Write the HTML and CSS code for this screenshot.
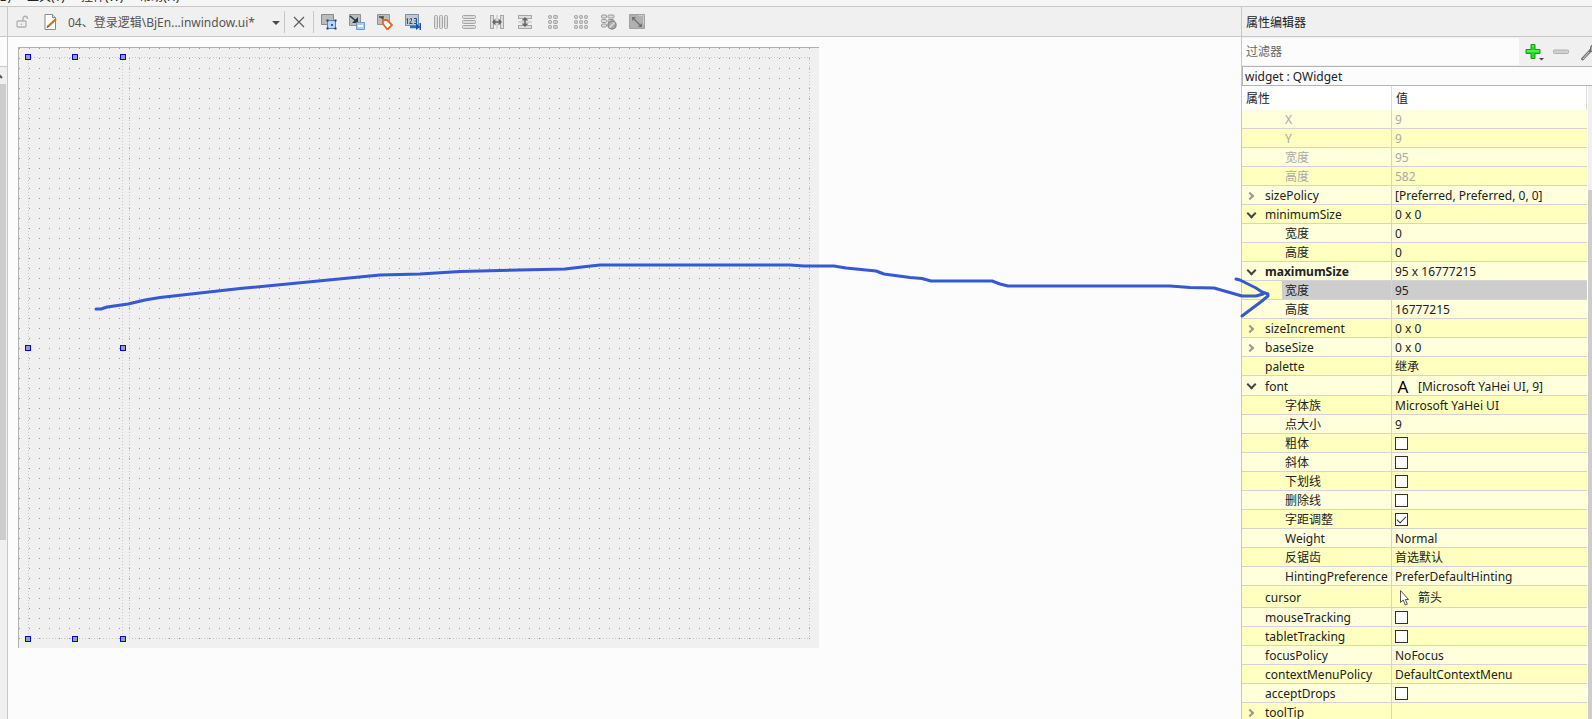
FILE: index.html
```html
<!DOCTYPE html>
<html lang="zh-CN">
<head>
  <meta charset="UTF-8" />
  <meta name="viewport" content="width=device-width, initial-scale=1.0"/>
  <title>BjEn...inwindow.ui - Designer</title>
  <link rel="stylesheet" href="styles.css">
</head>
<body>

  <nav class="menubar">
    <span>构建(B)</span>
    <span>工具(T)</span>
    <span>控件(W)</span>
    <span>帮助(H)</span>
  </nav>

  <div class="workspace">

    <!-- tail of the widget box -->
    <aside class="widget-box">
      <div class="box-title"></div>
      <div class="box-filter"></div>
      <div class="box-scroll">
        <svg class="scroll-up" width="6" height="17" viewBox="0 0 6 17"><path d="M-4 11L-1 8L2 11" fill="none" stroke="#555" stroke-width="2"/></svg>
        <div class="box-thumb"></div>
      </div>
    </aside>

    <main class="editor">
      <div class="toolbar">
        <button class="tool lock" aria-label="锁定">
          <svg width="16" height="16" viewBox="0 0 16 16" fill="none" stroke="#b0b0b0" stroke-width="1.3"><rect x="2" y="7" width="9" height="6" rx="1"/><path d="M8 7V4.500C8 1.500 12.500 1.500 12.500 4.500V5"/><path d="M6.500 9.500v1.500"/></svg>
        </button>
        <button class="tool doc" aria-label="文件">
          <svg width="16" height="16" viewBox="0 0 16 16"><path d="M2 .5h7.500l3 3V15.500H2z" fill="#fff" stroke="#8a8a8a"/><path d="M9.500 .5v3h3" fill="#ddd" stroke="#8a8a8a"/><path d="M5 12.500L13 5" stroke="#c8701c" stroke-width="2.2"/><path d="M3.500 14l1-2.500 1.500 1.500z" fill="#444"/></svg>
        </button>
        <div class="file-picker">
          <select aria-label="打开的文件">
            <option>04、登录逻辑\BjEn...inwindow.ui*</option>
          </select>
          <svg class="caret" width="8" height="4" viewBox="0 0 8 4"><path d="M0 0h8L4 4z" fill="#4a4a4a"/></svg>
        </div>
        <button class="tool close" aria-label="关闭">
          <svg width="12" height="12" viewBox="0 0 12 12"><path d="M1 1l10 10M11 1L1 11" stroke="#5c5c5c" stroke-width="1.2"/></svg>
        </button>
        <div class="tools">
          <button class="tool" aria-label="编辑控件">
            <svg width="16" height="16" viewBox="0 0 16 16"><path d="M.5 .5h12v10H.5z" fill="#bcbcbc" stroke="#8a8a8a"/><path d="M6.500 6.500h8v8h-8z" fill="#b8d6fa" stroke="#4f83c4"/><path d="M5.500 5.500h2v2h-2zM13.500 5.500h2v2h-2zM5.500 13.500h2v2h-2zM13.500 13.500h2v2h-2z" fill="#24405f"/><path d="M10 10h2v2h-2z" fill="#2c5fa8"/></svg>
          </button>
          <button class="tool" aria-label="编辑信号/槽">
            <svg width="16" height="16" viewBox="0 0 16 16"><path d="M.5 .5h11v11H.5z" fill="#bcbcbc" stroke="#929292"/><path d="M1 2l6 5" stroke="#20394a" stroke-width="1.600"/><path d="M9 3v6H3z" fill="#20394a"/><path d="M7.500 8.500h8v7h-8z" fill="#a9cdfa" stroke="#6d9ad0"/><path d="M9 12h5" stroke="#fff" stroke-width="2"/></svg>
          </button>
          <button class="tool" aria-label="编辑伙伴">
            <svg width="16" height="16" viewBox="0 0 16 16"><path d="M.5 .5h12v10H.5z" fill="#bcbcbc" stroke="#929292"/><path d="M2 3h5M4 3l4 4" stroke="#444" stroke-width="1.300"/><path d="M6 6h4l5 5-4.500 4.500L6 10z" fill="#fff" stroke="#e06a24" stroke-width="1.800"/></svg>
          </button>
          <button class="tool" aria-label="编辑Tab顺序">
            <svg width="16" height="16" viewBox="0 0 16 16"><path d="M.5 .5h13v11H.5z" fill="#c4c8cc" stroke="#7190b6"/><g fill="none" stroke="#17559e"><path d="M1.500 5.500l1-1V10M4.500 5.500l1-1h1v2L4.500 9.500h3M9 4.500h2.500v5H9M9.500 7h2"/></g><path d="M5 13h7" stroke="#2d6dbb" stroke-width="2.500"/><path d="M11 9l4 4-4 3zM14.500 9h1.500v7h-1.500z" fill="#17559e"/></svg>
          </button>
          <button class="tool" aria-label="水平布局">
            <svg width="16" height="16" viewBox="0 0 16 16" fill="#ddd" stroke="#a6a6a6"><rect x="1.500" y="1.500" width="3" height="13" rx="1"/><rect x="6.500" y="1.500" width="3" height="13" rx="1"/><rect x="11.500" y="1.500" width="3" height="13" rx="1"/></svg>
          </button>
          <button class="tool" aria-label="垂直布局">
            <svg width="16" height="16" viewBox="0 0 16 16" fill="#ddd" stroke="#a6a6a6"><rect x="1.500" y="1.500" width="13" height="3" rx="1"/><rect x="1.500" y="6.500" width="13" height="3" rx="1"/><rect x="1.500" y="11.500" width="13" height="3" rx="1"/></svg>
          </button>
          <button class="tool" aria-label="水平分裂器">
            <svg width="16" height="16" viewBox="0 0 16 16"><g fill="#ddd" stroke="#a6a6a6"><rect x="1.500" y="1.500" width="3" height="13"/><rect x="11.500" y="1.500" width="3" height="13"/></g><path d="M8 1v14" stroke="#bbb"/><path d="M4 8h8" stroke="#666" stroke-width="1.500"/><path d="M6.500 4.500v7L3 8zM9.500 4.500v7L13 8z" fill="#666"/></svg>
          </button>
          <button class="tool" aria-label="垂直分裂器">
            <svg width="16" height="16" viewBox="0 0 16 16"><g fill="#ddd" stroke="#a6a6a6"><rect x="1.500" y="1.500" width="13" height="3"/><rect x="1.500" y="11.500" width="13" height="3"/></g><path d="M1 8h14" stroke="#bbb"/><path d="M8 4v8" stroke="#666" stroke-width="1.500"/><path d="M4.500 6.500h7L8 3zM4.500 9.500h7L8 13z" fill="#666"/></svg>
          </button>
          <button class="tool" aria-label="表单布局">
            <svg width="16" height="16" viewBox="0 0 16 16" fill="#ccc" stroke="#a0a0a0"><rect x="3.500" y="1.500" width="3" height="3" rx="1"/><rect x="8.500" y="1.500" width="4" height="3" rx="1"/><rect x="3.500" y="6.500" width="3" height="3" rx="1"/><rect x="8.500" y="6.500" width="4" height="3" rx="1"/><rect x="3.500" y="11.500" width="3" height="3" rx="1"/><rect x="8.500" y="11.500" width="4" height="3" rx="1"/></svg>
          </button>
          <button class="tool" aria-label="栅格布局">
            <svg width="16" height="16" viewBox="0 0 16 16" fill="#ccc" stroke="#a0a0a0"><rect x="1.500" y="1.500" width="3" height="3" rx="1"/><rect x="6.500" y="1.500" width="3" height="3" rx="1"/><rect x="11.500" y="1.500" width="3" height="3" rx="1"/><rect x="1.500" y="6.500" width="3" height="3" rx="1"/><rect x="6.500" y="6.500" width="3" height="3" rx="1"/><rect x="11.500" y="6.500" width="3" height="3" rx="1"/><rect x="1.500" y="11.500" width="3" height="3" rx="1"/><rect x="6.500" y="11.500" width="3" height="3" rx="1"/><rect x="11.500" y="11.500" width="3" height="3" rx="1"/></svg>
          </button>
          <button class="tool" aria-label="打破布局">
            <svg width="16" height="16" viewBox="0 0 16 16"><g fill="#ddd" stroke="#999"><rect x=".5" y="1" width="5" height="3" rx="1"/><rect x="7" y="1" width="6" height="3" rx="1"/><rect x=".5" y="5.500" width="5" height="3" rx="1"/><rect x="7" y="5.500" width="6" height="3" rx="1"/><rect x=".5" y="10" width="5" height="3" rx="1"/></g><circle cx="11" cy="11" r="4" fill="#aaa" stroke="#8b8b8b" stroke-width="1.500"/><path d="M8.500 13.500l5-5" stroke="#ddd" stroke-width="1.500"/></svg>
          </button>
          <button class="tool" aria-label="调整大小">
            <svg width="16" height="16" viewBox="0 0 16 16"><path d="M.5 .5h15v14H.5z" fill="#b0b0b0" stroke="#a2a2a2"/><path d="M9.500 1.500h5v9" fill="none" stroke="#ccc"/><path d="M4 4l8 8" stroke="#707070" stroke-width="1.300"/><path d="M3 3h4L3 7zM13 13H9l4-4z" fill="#707070"/></svg>
          </button>
        </div>
      </div>

      <div class="canvas">
        <div class="form">
          <div class="layout-box">
            <div class="widget selected">
              <i class="handle top left"></i>
              <i class="handle top center"></i>
              <i class="handle top right"></i>
              <i class="handle middle left"></i>
              <i class="handle middle right"></i>
              <i class="handle bottom left"></i>
              <i class="handle bottom center"></i>
              <i class="handle bottom right"></i>
            </div>
            <div class="widget rest"></div>
          </div>
        </div>
      </div>
    </main>

    <aside class="properties">
      <h2>属性编辑器</h2>
      <div class="filter-row">
        <input type="text" placeholder="过滤器" aria-label="过滤器">
        <button class="tool" aria-label="添加">
          <svg width="20" height="18" viewBox="0 0 20 18"><path d="M6 1.500h4v5h5v4h-5v5H6v-5H1v-4h5z" fill="#24dc24" stroke="#169c16"/><path d="M7 3h2M2 8h12" stroke="#90f490"/><path d="M14 15h5l-2.500 2.500z" fill="#444"/></svg>
        </button>
        <button class="tool" aria-label="删除">
          <svg width="16" height="18" viewBox="0 0 16 18"><rect x=".5" y="7" width="15" height="3.500" rx="1" fill="#d0d0d0" stroke="#b0b0b0"/></svg>
        </button>
        <button class="tool" aria-label="配置">
          <svg width="16" height="18" viewBox="0 0 16 18"><path d="M1.500 16L10 7" stroke="#777" stroke-width="3" stroke-linecap="round"/><path d="M9 8l1-5 3-2v3l3 2-2 3z" fill="#aaa" stroke="#666"/><path d="M2 16l6-7" stroke="#ccc"/></svg>
        </button>
      </div>
      <div class="object-name">widget : QWidget</div>

      <div class="sheet">
        <table>
          <colgroup><col class="col-name"><col></colgroup>
          <thead>
            <tr><th>属性</th><th>值</th></tr>
          </thead>
          <tbody>
            <tr class="disabled"><td class="sub">X</td><td>9</td></tr>
            <tr class="disabled"><td class="sub">Y</td><td>9</td></tr>
            <tr class="disabled"><td class="sub">宽度</td><td>95</td></tr>
            <tr class="disabled"><td class="sub">高度</td><td>582</td></tr>
            <tr><td class="closed">sizePolicy</td><td>[Preferred, Preferred, 0, 0]</td></tr>
            <tr><td class="open">minimumSize</td><td>0 x 0</td></tr>
            <tr><td class="sub">宽度</td><td>0</td></tr>
            <tr><td class="sub">高度</td><td>0</td></tr>
            <tr><td class="open changed">maximumSize</td><td>95 x 16777215</td></tr>
            <tr class="current"><td class="sub">宽度</td><td>95</td></tr>
            <tr><td class="sub">高度</td><td>16777215</td></tr>
            <tr><td class="closed">sizeIncrement</td><td>0 x 0</td></tr>
            <tr><td class="closed">baseSize</td><td>0 x 0</td></tr>
            <tr><td>palette</td><td>继承</td></tr>
            <tr class="font-row"><td class="open">font</td><td><span class="with-icon"><b class="font-icon">A</b>[Microsoft YaHei UI, 9]</span></td></tr>
            <tr><td class="sub">字体族</td><td>Microsoft YaHei UI</td></tr>
            <tr><td class="sub">点大小</td><td>9</td></tr>
            <tr><td class="sub"><label for="bold">粗体</label></td><td><input type="checkbox" id="bold"></td></tr>
            <tr><td class="sub"><label for="italic">斜体</label></td><td><input type="checkbox" id="italic"></td></tr>
            <tr><td class="sub"><label for="underline">下划线</label></td><td><input type="checkbox" id="underline"></td></tr>
            <tr><td class="sub"><label for="strikeout">删除线</label></td><td><input type="checkbox" id="strikeout"></td></tr>
            <tr><td class="sub"><label for="kerning">字距调整</label></td><td><input type="checkbox" id="kerning" checked></td></tr>
            <tr><td class="sub">Weight</td><td>Normal</td></tr>
            <tr><td class="sub">反锯齿</td><td>首选默认</td></tr>
            <tr><td class="sub">HintingPreference</td><td>PreferDefaultHinting</td></tr>
            <tr class="cursor-row"><td>cursor</td><td><span class="with-icon"><svg width="16" height="16" viewBox="0 0 16 16"><path d="M5.500 .5v12l2.800-2.500 2 5 2-.8-2-4.700h3.200z" fill="#fff" stroke="#555"/></svg>箭头</span></td></tr>
            <tr><td><label for="mouse">mouseTracking</label></td><td><input type="checkbox" id="mouse"></td></tr>
            <tr><td><label for="tablet">tabletTracking</label></td><td><input type="checkbox" id="tablet"></td></tr>
            <tr><td>focusPolicy</td><td>NoFocus</td></tr>
            <tr><td>contextMenuPolicy</td><td>DefaultContextMenu</td></tr>
            <tr><td><label for="drops">acceptDrops</label></td><td><input type="checkbox" id="drops"></td></tr>
            <tr><td class="closed">toolTip</td><td></td></tr>
          </tbody>
        </table>
        <div class="sheet-scroll"><div class="sheet-thumb"></div></div>
      </div>
    </aside>
  </div>

  <!-- hand-drawn arrow from the widget to its maximum width -->
  <svg class="annotation" width="1280" height="330" viewBox="0 0 1280 330">
    <path d="M96 309L101 309 107 307 128 304 145 300 160 297.500 240 288.500 380 275 420 274 460 271.500 565 269 582 267 600 265 790 265 804 266 834 266 846 268 876 271 884 274 910 277.500 922 278.500 931 281 992 281 1000 284 1008 286 1170 286 1190 287.500 1214 288 1228 292 1242 296 1256 296 1263 294"/>
    <path d="M1236 279L1240 280 1256 288 1262 292 1268 294 1268 296 1262 301 1242 316"/>
  </svg>

</body>
</html>
```
FILE: styles.css
```css
*,
*::before {
  box-sizing: border-box;
}

body {
  margin: 0;
  height: 100vh;
  display: flex;
  flex-direction: column;
  overflow: hidden;
  position: relative;
  background: #f0f0f0;
  color: #222;
  font-family: "Noto Sans", "Noto Sans CJK SC", sans-serif;
  font-size: 12px;
  line-height: 18px;
}

button {
  padding: 0;
  border: 0;
  background: none;
}

svg {
  display: block;
}

/* scrolled almost out of view, only the feet of the letters show */
.menubar {
  flex: none;
  height: 7px;
  display: flex;
  align-items: flex-end;
  gap: 16px;
  margin-left: -28px;
  background: #f6f6f6;
  border-bottom: 1px solid #c8c8c8;
  overflow: hidden;
}

.workspace {
  flex: 1;
  min-height: 0;
  display: flex;
}

/* left edge */
.widget-box {
  width: 8px;
  flex: none;
  display: flex;
  flex-direction: column;
  border-right: 1px solid #c8c8c8;
}

.box-title {
  height: 30px;
  border-bottom: 1px solid #c8c8c8;
}

.box-filter {
  height: 30px;
  background: #fcfcfc;
  border-bottom: 1px solid #c8c8c8;
}

.box-scroll {
  flex: 1;
}

.box-thumb {
  width: 6px;
  height: 70%;
  background: #cdcdcd;
}

/* form editor */
.editor {
  flex: 1;
  min-width: 0;
  display: flex;
  flex-direction: column;
}

.toolbar {
  flex: none;
  height: 30px;
  display: flex;
  align-items: center;
  border-bottom: 1px solid #c8c8c8;
}

.lock {
  margin-left: 7px;
}

.doc {
  margin-left: 12px;
}

.file-picker {
  position: relative;
  width: 218px;
  margin-left: 8px;
  border-right: 1px solid #c8c8c8;
}

.file-picker select {
  display: block;
  appearance: none;
  width: 100%;
  height: 22px;
  border: 0;
  padding: 2px 20px 0 1px;
  background: none;
  color: #555;
  font: inherit;
}

.caret {
  position: absolute;
  right: 4px;
  top: 10px;
  pointer-events: none;
}

.close {
  margin: 0 8px;
}

.tools {
  display: flex;
  align-items: center;
  gap: 12px;
  height: 22px;
  padding-left: 7px;
  border-left: 1px solid #c8c8c8;
}

.canvas {
  flex: 1;
  min-height: 0;
  padding: 10px;
  background: #fcfcfc;
  overflow: hidden;
}

.form {
  width: 801px;
  height: 601px;
  padding: 9px;
  border-top: 1px solid #b0b0b0;
  border-left: 1px solid #b0b0b0;
  background: conic-gradient(from 270deg at 1px 1px, #989898 90deg, #f0f0f0 0) 0 0 / 10px 10px;
}

.layout-box {
  display: flex;
  gap: 6px;
  height: 582px;
}

/* dotted guides, one dot every three pixels */
.widget {
  background:
    repeating-linear-gradient(90deg, #c8c8c8 0 1px, transparent 1px 3px) 0 0 / 100% 1px no-repeat,
    repeating-linear-gradient(90deg, #c8c8c8 0 1px, transparent 1px 3px) 0 100% / 100% 1px no-repeat,
    repeating-linear-gradient(#c8c8c8 0 1px, transparent 1px 3px) 0 0 / 1px 100% no-repeat,
    repeating-linear-gradient(#c8c8c8 0 1px, transparent 1px 3px) 100% 0 / 1px 100% no-repeat;
}

.selected {
  position: relative;
  width: 95px;
}

.rest {
  flex: 1;
}

.handle {
  position: absolute;
  width: 6px;
  height: 6px;
  background: #a0a0a4;
  border: 1px solid #0000ff;
}

.top { top: -3px; }
.middle { top: calc(50% - 3px); }
.bottom { bottom: -3px; }
.left { left: -3px; }
.center { left: 44px; }
.right { right: -3px; }

/* property editor */
.properties {
  width: 351px;
  flex: none;
  display: flex;
  flex-direction: column;
  border-left: 1px solid #c8c8c8;
  overflow: hidden;
}

.properties h2 {
  flex: none;
  height: 30px;
  margin: 0;
  padding: 1px 0 0 4px;
  border-bottom: 1px solid #c8c8c8;
  font-size: 12px;
  font-weight: normal;
  line-height: 30px;
}

.filter-row {
  flex: none;
  height: 29px;
  display: flex;
  align-items: center;
}

.filter-row input {
  width: 277px;
  flex: none;
  height: 27px;
  padding: 0 4px;
  border: 0;
  background: #fcfcfc;
  color: #555;
  font: inherit;
}

.filter-row input::placeholder {
  color: #666;
}

.filter-row .tool {
  flex: none;
  margin-left: 6px;
}

.filter-row .tool + .tool {
  margin-left: 8px;
}

.filter-row .tool + .tool + .tool {
  margin-left: 12px;
}

.object-name {
  flex: none;
  height: 20px;
  padding: 1px 0 0 2px;
  border: 1px solid #b4b4b4;
  border-right: 0;
  background: #fcfcfc;
}

.sheet {
  flex: 1;
  min-height: 0;
  display: flex;
  justify-content: space-between;
  background: #fff;
  overflow: hidden;
}

table {
  width: 345px;
  table-layout: fixed;
  border-spacing: 0;
  align-self: flex-start;
  line-height: 16px;
}

.col-name {
  width: 150px;
}

th {
  height: 24px;
  padding: 2px 4px 0;
  border-right: 1px solid #dcdcdc;
  background: #fff;
  font-weight: normal;
  text-align: left;
}

td {
  height: 19px;
  padding: 2px 0 0 3px;
  border-bottom: 1px solid #d4d4d4;
  white-space: nowrap;
}

td:first-child {
  padding-left: 23px;
  border-right: 1px solid #d4d4d4;
}

td.sub:first-child {
  padding-left: 43px;
}

tbody tr:nth-child(odd) {
  background: #ffffdc;
}

tbody tr:nth-child(even) {
  background: #ffffbf;
}

.font-row td {
  height: 20px;
}

.cursor-row td {
  height: 22px;
}

.disabled {
  color: #aaa;
}

.changed {
  font-weight: bold;
}

.current td {
  background: #cdcdcd;
}

.current td:first-child {
  background: linear-gradient(90deg, #ffffbf 40px, #cdcdcd 40px);
}

.open::before,
.closed::before {
  content: "";
  display: inline-block;
  width: 7px;
  height: 7px;
  margin: 0 10px 5px -17px;
  border: solid #444;
  border-width: 0 2px 2px 0;
  transform: rotate(45deg);
  vertical-align: middle;
}

.closed::before {
  width: 6px;
  height: 6px;
  border-color: #999;
  margin: 0 12px 2px -18px;
  transform: rotate(-45deg);
}

.with-icon {
  display: flex;
  align-items: center;
  gap: 7px;
}

.font-icon {
  width: 16px;
  color: #000;
  font-size: 17px;
  font-weight: normal;
  text-align: center;
}

td input[type=checkbox] {
  appearance: none;
  display: block;
  width: 13px;
  height: 13px;
  margin: 0 0 1px;
  border: 1px solid #333;
  background: #fff;
}

td input[type=checkbox]:checked::before {
  content: "";
  display: block;
  width: 9px;
  height: 5px;
  margin: 2px 0 0 1px;
  border: solid #333;
  border-width: 0 0 1px 1px;
  transform: rotate(-45deg);
}

.sheet-scroll {
  width: 4px;
  padding-top: 104px;
  background: #f0f0f0;
}

.sheet-thumb {
  height: 100%;
  background: #cdcdcd;
}

.annotation {
  position: absolute;
  top: 0;
  left: 0;
  fill: none;
  stroke: #3558d4;
  stroke-width: 3;
  stroke-linecap: round;
  stroke-linejoin: round;
  pointer-events: none;
}
```
